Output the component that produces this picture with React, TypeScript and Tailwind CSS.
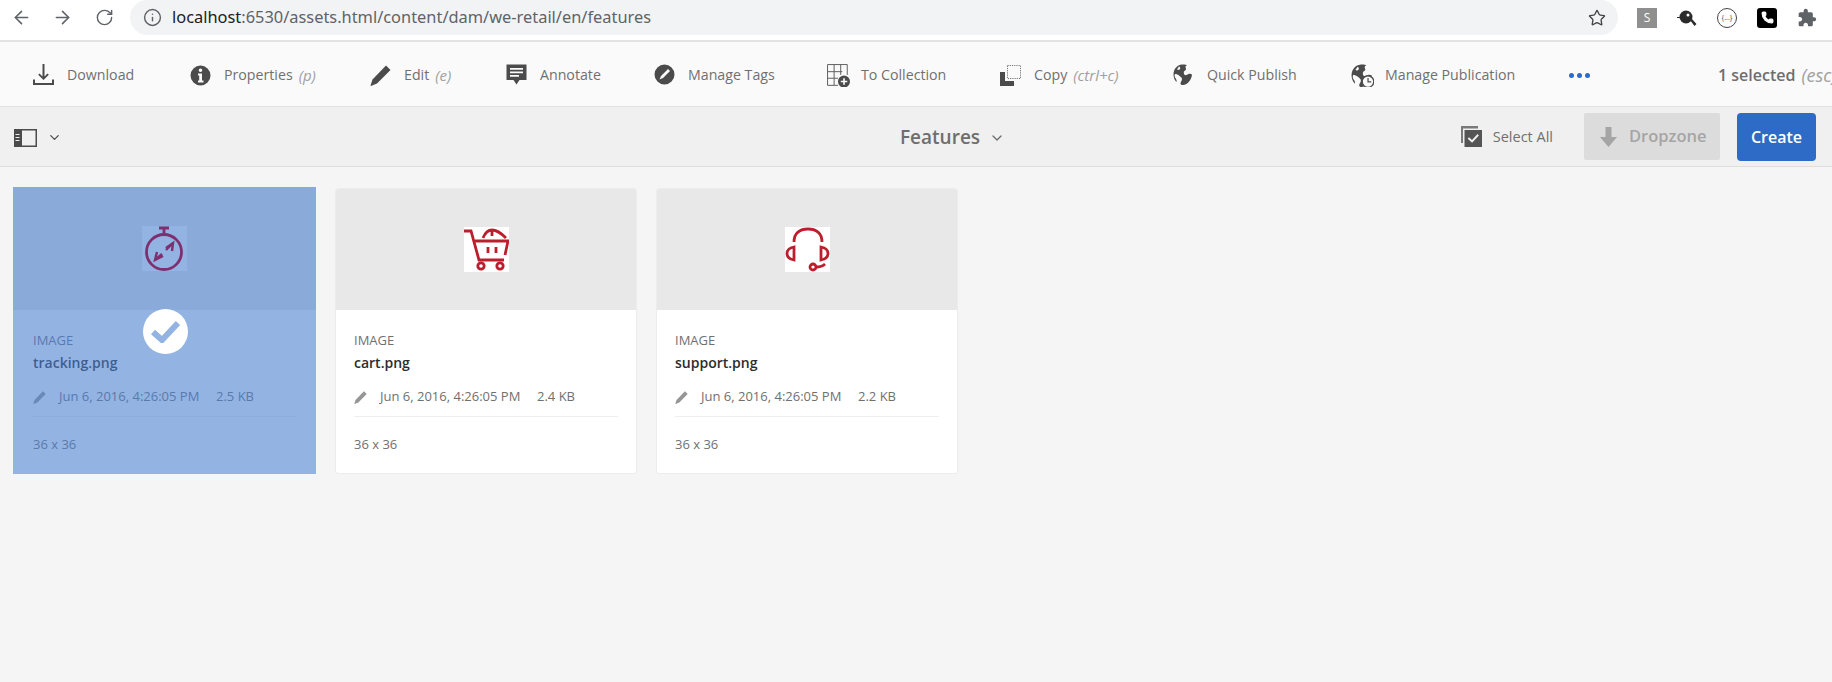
import { ArrowLeft, ArrowRight, ChevronDown, Info, Phone, RotateCw, Star } from 'lucide-react'
import type { ReactNode } from 'react'

const FONT = "font-['Open_Sans','Noto_Sans',sans-serif]"

function Glyph({ children, w = 21, h = 21 }: { children: ReactNode; w?: number; h?: number }) {
  return (
    <svg width={w} height={h} viewBox="0 0 21 21" fill="#4b4b4b">
      {children}
    </svg>
  )
}

const globe = (
  <>
    <path d="M9 0.500C4 1 0.500 5 0.500 10.500c0 3 1.200 5.500 3 7.500 .5-2-.5-3-1.500-4.500-.5-1-.5-2.500 0-3.500 1.500 0 3 .5 4 1.500 1.500 1.500 3 2 3 3.500 0 2-1.500 2.500-1.500 4.500 0 .5 .3 1.200 1 1.500 5.500 .5 10-4.500 10.500-10.500-1-.5-2.500-1-3.500-.5-1 .5-2 1.500-3.500 1-1-.5-1.500-2-1-3.500 .5-1 1.500-1 2-2 .3-1-.5-1.500-.5-2.500 0-1 1-1.500 1.500-2C13.500 .8 11 .2 9 .5z" />
    <path d="M6 2.500c1 .5 1.500 1.500 1 2.500-.5 1-2 1-3 .5z" fill="#fafafa" />
  </>
)

const toolbar: { label: string; hint?: string; width: string; icon: ReactNode }[] = [
  {
    label: 'Download',
    width: 'w-[157px]',
    icon: (
      <Glyph>
        <path d="M9.500 0h2v12.500l3-3 1.300 1.300-5.300 5.300-5.300-5.300 1.300-1.300 3 3z" />
        <path d="M0 15.500h2v3.500h17v-3.500h2V21H0z" />
      </Glyph>
    ),
  },
  {
    label: 'Properties',
    hint: '(p)',
    width: 'w-[180px]',
    icon: (
      <Glyph>
        <path
          fillRule="evenodd"
          d="M10.500 0.500a10 10 0 1 0 0 20 10 10 0 0 0 0-20zM10.500 3.500a1.800 1.800 0 1 1 0 3.600 1.800 1.800 0 0 1 0-3.600zM8 8.500h4v7h1.500v2h-5.500v-2h1.200v-5H8z"
        />
      </Glyph>
    ),
  },
  {
    label: 'Edit',
    hint: '(e)',
    width: 'w-[136px]',
    icon: (
      <Glyph>
        <path d="M16 0.500 20.500 5 7 18.500 1 21 0.500 20.500 2.500 14.500z" />
      </Glyph>
    ),
  },
  {
    label: 'Annotate',
    width: 'w-[148px]',
    icon: (
      <Glyph>
        <path
          fillRule="evenodd"
          d="M0.500 0.500h20v15.500h-7l-3 4.500-3-4.500h-7zM4 4v1.800h13V4zM4 7.500v1.800h13V7.500zM4 11v1.800h9V11z"
        />
      </Glyph>
    ),
  },
  {
    label: 'Manage Tags',
    width: 'w-[173px]',
    icon: (
      <Glyph>
        <path
          fillRule="evenodd"
          d="M10.500 0.500a10 10 0 1 0 0 20 10 10 0 0 0 0-20zM14 5l2 2-7 7-3.500 1.500L7 12z"
        />
      </Glyph>
    ),
  },
  {
    label: 'To Collection',
    width: 'w-[173px]',
    icon: (
      <Glyph w={23} h={23}>
        <path
          d="M0.500 0.500H18.500V10M12.500 0.500V10M6.500 0.500V19.500H0.500V0.500M0.500 7H14M0.500 13H10M6.500 19.500H10"
          fill="none"
          stroke="#5f5f5f"
          strokeWidth="0.900"
        />
        <path
          fillRule="evenodd"
          d="M15.500 10.500a5.500 5.500 0 1 0 0 11 5.500 5.500 0 0 0 0-11zM14.800 13h1.500v2.200h2.200v1.500h-2.200v2.200h-1.500v-2.200h-2.200v-1.500h2.200z"
        />
      </Glyph>
    ),
  },
  {
    label: 'Copy',
    hint: '(ctrl+c)',
    width: 'w-[173px]',
    icon: (
      <Glyph>
        <path d="M0 7h5v9h9v5H0z" />
        <rect x="7.500" y="0.500" width="13" height="13" fill="none" stroke="#777" strokeWidth="1" strokeDasharray="1.200 1" />
      </Glyph>
    ),
  },
  {
    label: 'Quick Publish',
    width: 'w-[178px]',
    icon: <Glyph>{globe}</Glyph>,
  },
  {
    label: 'Manage Publication',
    width: 'w-[218px]',
    icon: (
      <Glyph w={23} h={23}>
        {globe}
        <circle cx="15.500" cy="16" r="5.300" fill="#fafafa" stroke="#4b4b4b" strokeWidth="1.200" />
        <path d="M15 12.800h1.100v3h2.400v1.100H15z" />
      </Glyph>
    ),
  },
]

const assets = [
  { kind: 'tracking', name: 'tracking.png', size: '2.5 KB', selected: true },
  { kind: 'cart', name: 'cart.png', size: '2.4 KB', selected: false },
  { kind: 'support', name: 'support.png', size: '2.2 KB', selected: false },
]

function Thumb({ kind }: { kind: string }) {
  if (kind === 'tracking') {
    return (
      <svg className="relative z-10" width="45" height="45" viewBox="0 0 45 45" fill="none" stroke="#7f2f70" strokeWidth="2.800">
        <circle cx="22" cy="26" r="17.500" />
        <path d="M17 2h10M22 2v6" />
        <path d="M24 22l7-5-1 8M31 17l-7 7" strokeWidth="2.400" />
        <path d="M21 30l-8 4 2-8M13 34l7-6" strokeWidth="2.400" />
      </svg>
    )
  }
  if (kind === 'cart') {
    return (
      <svg width="45" height="45" viewBox="0 0 45 45" fill="none" stroke="#bb1f2d" strokeWidth="2.800">
        <path d="M0 4h7l8 29h25" />
        <path d="M11 14h33l-3 14" />
        <path d="M19 11c2-5 5-8 9-8s9 3 14 8M28 3v6" />
        <path d="M24 20v6M32 20v6" />
        <circle cx="17" cy="39" r="3.200" />
        <circle cx="36" cy="39" r="3.200" />
      </svg>
    )
  }
  return (
    <svg width="45" height="45" viewBox="0 0 45 45" fill="none" stroke="#bb1f2d" strokeWidth="2.800">
      <path d="M9 15C9 6 15 2 23 2s14 4 14 13" />
      <path d="M9 20v13C4 32 2 30 2 26.500S4 21 9 20z" />
      <path d="M36 20v13c5-1 7-3 7-6.500S41 21 36 20z" />
      <circle cx="28" cy="40" r="3" />
      <path d="M31 40c4 0 7-1 9-3" />
    </svg>
  )
}

function AssetCard({ kind, name, size, selected }: (typeof assets)[0]) {
  return (
    <div
      className={`relative flex flex-col overflow-hidden bg-white ${selected ? 'w-[303px] h-[287px] -mt-px' : 'w-[302px] h-[286px] rounded-[3px] border border-[#ececec]'}`}
    >
      <div className={`shrink-0 flex items-center justify-center bg-[#e8e8e8] ${selected ? 'h-[123px]' : 'h-[121px]'}`}>
        <div className="w-[45px] h-[45px] bg-white">
          <Thumb kind={kind} />
        </div>
      </div>
      <div className={`flex-1 pt-[21px] ${selected ? 'px-[20px]' : 'px-[18px]'}`}>
        <div className="text-[13px] leading-[18px] text-[#707070]">IMAGE</div>
        <div className="mt-[5px] text-[14px] leading-[18px] font-semibold text-[#2c2c2c]">{name}</div>
        <div className="mt-[16px] flex items-center h-[18px] text-[13px] text-[#707070]">
          <svg width="13" height="13" viewBox="0 0 21 21" fill="#969696">
            <path d="M16 0.500 20.500 5 7 18.500 1 21 0.500 20.500 2.500 14.500z" />
          </svg>
          <span className="ml-[13px] w-[157px] whitespace-nowrap">Jun 6, 2016, 4:26:05 PM</span>
          <span className="whitespace-nowrap">{size}</span>
        </div>
        <div className="mt-[10px] border-t border-[#eeeeee]" />
        <div className="mt-[18px] text-[13px] leading-[18px] text-[#707070]">36 x 36</div>
      </div>
      {selected && (
        <>
          <div className="absolute inset-0 bg-[#4b80d0]/60" />
          <div className="absolute left-[130px] top-[122px] w-[45px] h-[45px] rounded-full bg-white flex items-center justify-center">
            <svg width="29" height="23" viewBox="0 0 29 23" fill="none" stroke="#93b3e3" strokeWidth="6">
              <path d="M2 12l9 8L27 3" />
            </svg>
          </div>
        </>
      )}
    </div>
  )
}

export default function App() {
  return (
    <div className={`h-[682px] overflow-hidden bg-[#f5f5f5] ${FONT}`}>
      {/* browser chrome */}
      <div className="h-[40px] bg-white flex items-start">
        <div className="w-[130px] h-[35px] flex items-center pl-[11px] text-[#5f6368]">
          <ArrowLeft size={21} strokeWidth={1.8} />
          <ArrowRight size={21} strokeWidth={1.8} className="ml-[20px]" />
          <RotateCw size={19} strokeWidth={1.8} className="ml-[22px]" />
        </div>
        <div className="w-[1488px] h-[35px] rounded-full bg-[#f1f3f4] flex items-center pl-[13px] pr-[12px]">
          <Info size={19} strokeWidth={1.8} className="text-[#5f6368]" />
          <span className="ml-[10px] text-[16.400px] text-[#5f6368] font-['Noto_Sans',sans-serif] whitespace-nowrap">
            <span className="text-[#202124]">localhost</span>:6530/assets.html/content/dam/we-retail/en/features
          </span>
          <Star size={18} strokeWidth={1.8} className="ml-auto text-[#444]" />
        </div>
        <div className="flex items-center h-[35px] pl-[19px] gap-[20px]">
          <div className="w-[20px] h-[20px] bg-[#8f8f8f] text-white text-[12px] flex items-center justify-center">S</div>
          <svg width="20" height="20" viewBox="0 0 20 20" fill="#2b2b2b">
            <circle cx="9" cy="9" r="6.500" />
            <path d="M0 9h3v1H0zM13 12l1.500-1.500 5 5.500-2 2z" />
            <circle cx="11" cy="7" r="1.500" fill="#fff" />
          </svg>
          <div className="w-[20px] h-[20px] rounded-full border border-[#444] text-[7px] leading-none text-[#444] flex items-center justify-center">
            {'{...}'}
          </div>
          <div className="w-[20px] h-[20px] rounded-[3px] bg-black flex items-center justify-center">
            <Phone size={13} fill="#fff" stroke="#fff" />
          </div>
          <svg width="20" height="20" viewBox="0 0 24 24" fill="#5f6368">
            <path d="M20.500 11H19V7c0-1.100-.9-2-2-2h-4V3.500C13 2.120 11.880 1 10.500 1S8 2.120 8 3.500V5H4c-1.100 0-1.990.9-1.990 2v3.800H3.500c1.490 0 2.700 1.210 2.700 2.700s-1.210 2.700-2.700 2.700H2V20c0 1.100.9 2 2 2h3.800v-1.500c0-1.490 1.210-2.700 2.700-2.700 1.490 0 2.700 1.210 2.700 2.700V22H17c1.100 0 2-.9 2-2v-4h1.500c1.380 0 2.500-1.120 2.500-2.500S21.880 11 20.500 11z" />
          </svg>
        </div>
      </div>

      {/* action toolbar */}
      <div className="h-[67px] pt-[2px] border-t-2 border-b border-t-[#e2e2e2] border-b-[#e2e2e2] bg-[#fafafa] flex items-center pl-[33px] whitespace-nowrap overflow-hidden">
        {toolbar.map((item) => (
          <div key={item.label} className={`flex items-center shrink-0 ${item.width}`}>
            <span className="w-[34px] shrink-0">{item.icon}</span>
            <span className="text-[14.200px] text-[#707070]">{item.label}</span>
            {item.hint && <span className="ml-[6px] text-[15px] italic text-[#a0a0a0]">{item.hint}</span>}
          </div>
        ))}
        <div className="w-[149px] shrink-0 flex gap-[3px]">
          <span className="w-[5px] h-[5px] rounded-full bg-[#2d6bc6]" />
          <span className="w-[5px] h-[5px] rounded-full bg-[#2d6bc6]" />
          <span className="w-[5px] h-[5px] rounded-full bg-[#2d6bc6]" />
        </div>
        <span className="shrink-0 text-[16px] font-semibold text-[#6e6e6e]">1 selected</span>
        <span className="shrink-0 ml-[6px] text-[18px] italic text-[#a0a0a0]">(esc)</span>
      </div>

      {/* title bar */}
      <div className="h-[60px] border-b border-[#dedede] bg-[#f0f0f0] flex items-center pl-[14px] pr-[16px]">
        <svg className="mt-[2px]" width="23" height="18" viewBox="0 0 23 18">
          <rect x="0.750" y="0.750" width="21.500" height="16.500" fill="none" stroke="#4b4b4b" strokeWidth="1.500" />
          <rect x="0" y="0" width="8" height="18" fill="#4b4b4b" />
          <path d="M1.500 5h4v1h-4zM1.500 8h4v1h-4zM1.500 11h4v1h-4z" fill="#f0f0f0" />
        </svg>
        <ChevronDown size={15} strokeWidth={2} className="ml-[10px] mt-[2px] text-[#4b4b4b]" />
        <div className="flex-1 flex items-center pl-[838px] pt-[2px]">
          <span className="text-[19px] font-semibold text-[#6e6e6e]">Features</span>
          <ChevronDown size={16} strokeWidth={2} className="ml-[9px] text-[#6e6e6e]" />
        </div>
        <svg width="21" height="21" viewBox="0 0 21 21" fill="#555555">
          <path d="M0 0h17v2.500H2V17H0z" fill="#7a7a7a" />
          <path
            fillRule="evenodd"
            d="M3.500 4H21v17H3.500zM16.500 8l-5.500 6-3-2.700-1.300 1.400 4.400 4 6.800-7.300z"
          />
        </svg>
        <span className="ml-[11px] text-[14.500px] text-[#707070]">Select All</span>
        <div className="ml-[31px] w-[136px] h-[47px] bg-[#dcdcdc] rounded-[2px] flex items-center pl-[16px]">
          <svg width="17" height="20" viewBox="0 0 17 20" fill="#a5a5a5">
            <path d="M5.500 0h6v10H17l-8.500 10L0 10h5.500z" />
          </svg>
          <span className="ml-[12px] text-[16.500px] font-semibold text-[#a5a5a5]">Dropzone</span>
        </div>
        <div className="ml-[17px] w-[79px] h-[48px] rounded-[4px] bg-[#2d6bc6] flex items-center justify-center text-[16px] font-semibold text-white">
          Create
        </div>
      </div>

      {/* asset cards */}
      <div className="flex items-start gap-[19px] pl-[13px] pt-[21px]">
        {assets.map((a) => (
          <AssetCard key={a.name} {...a} />
        ))}
      </div>
    </div>
  )
}
